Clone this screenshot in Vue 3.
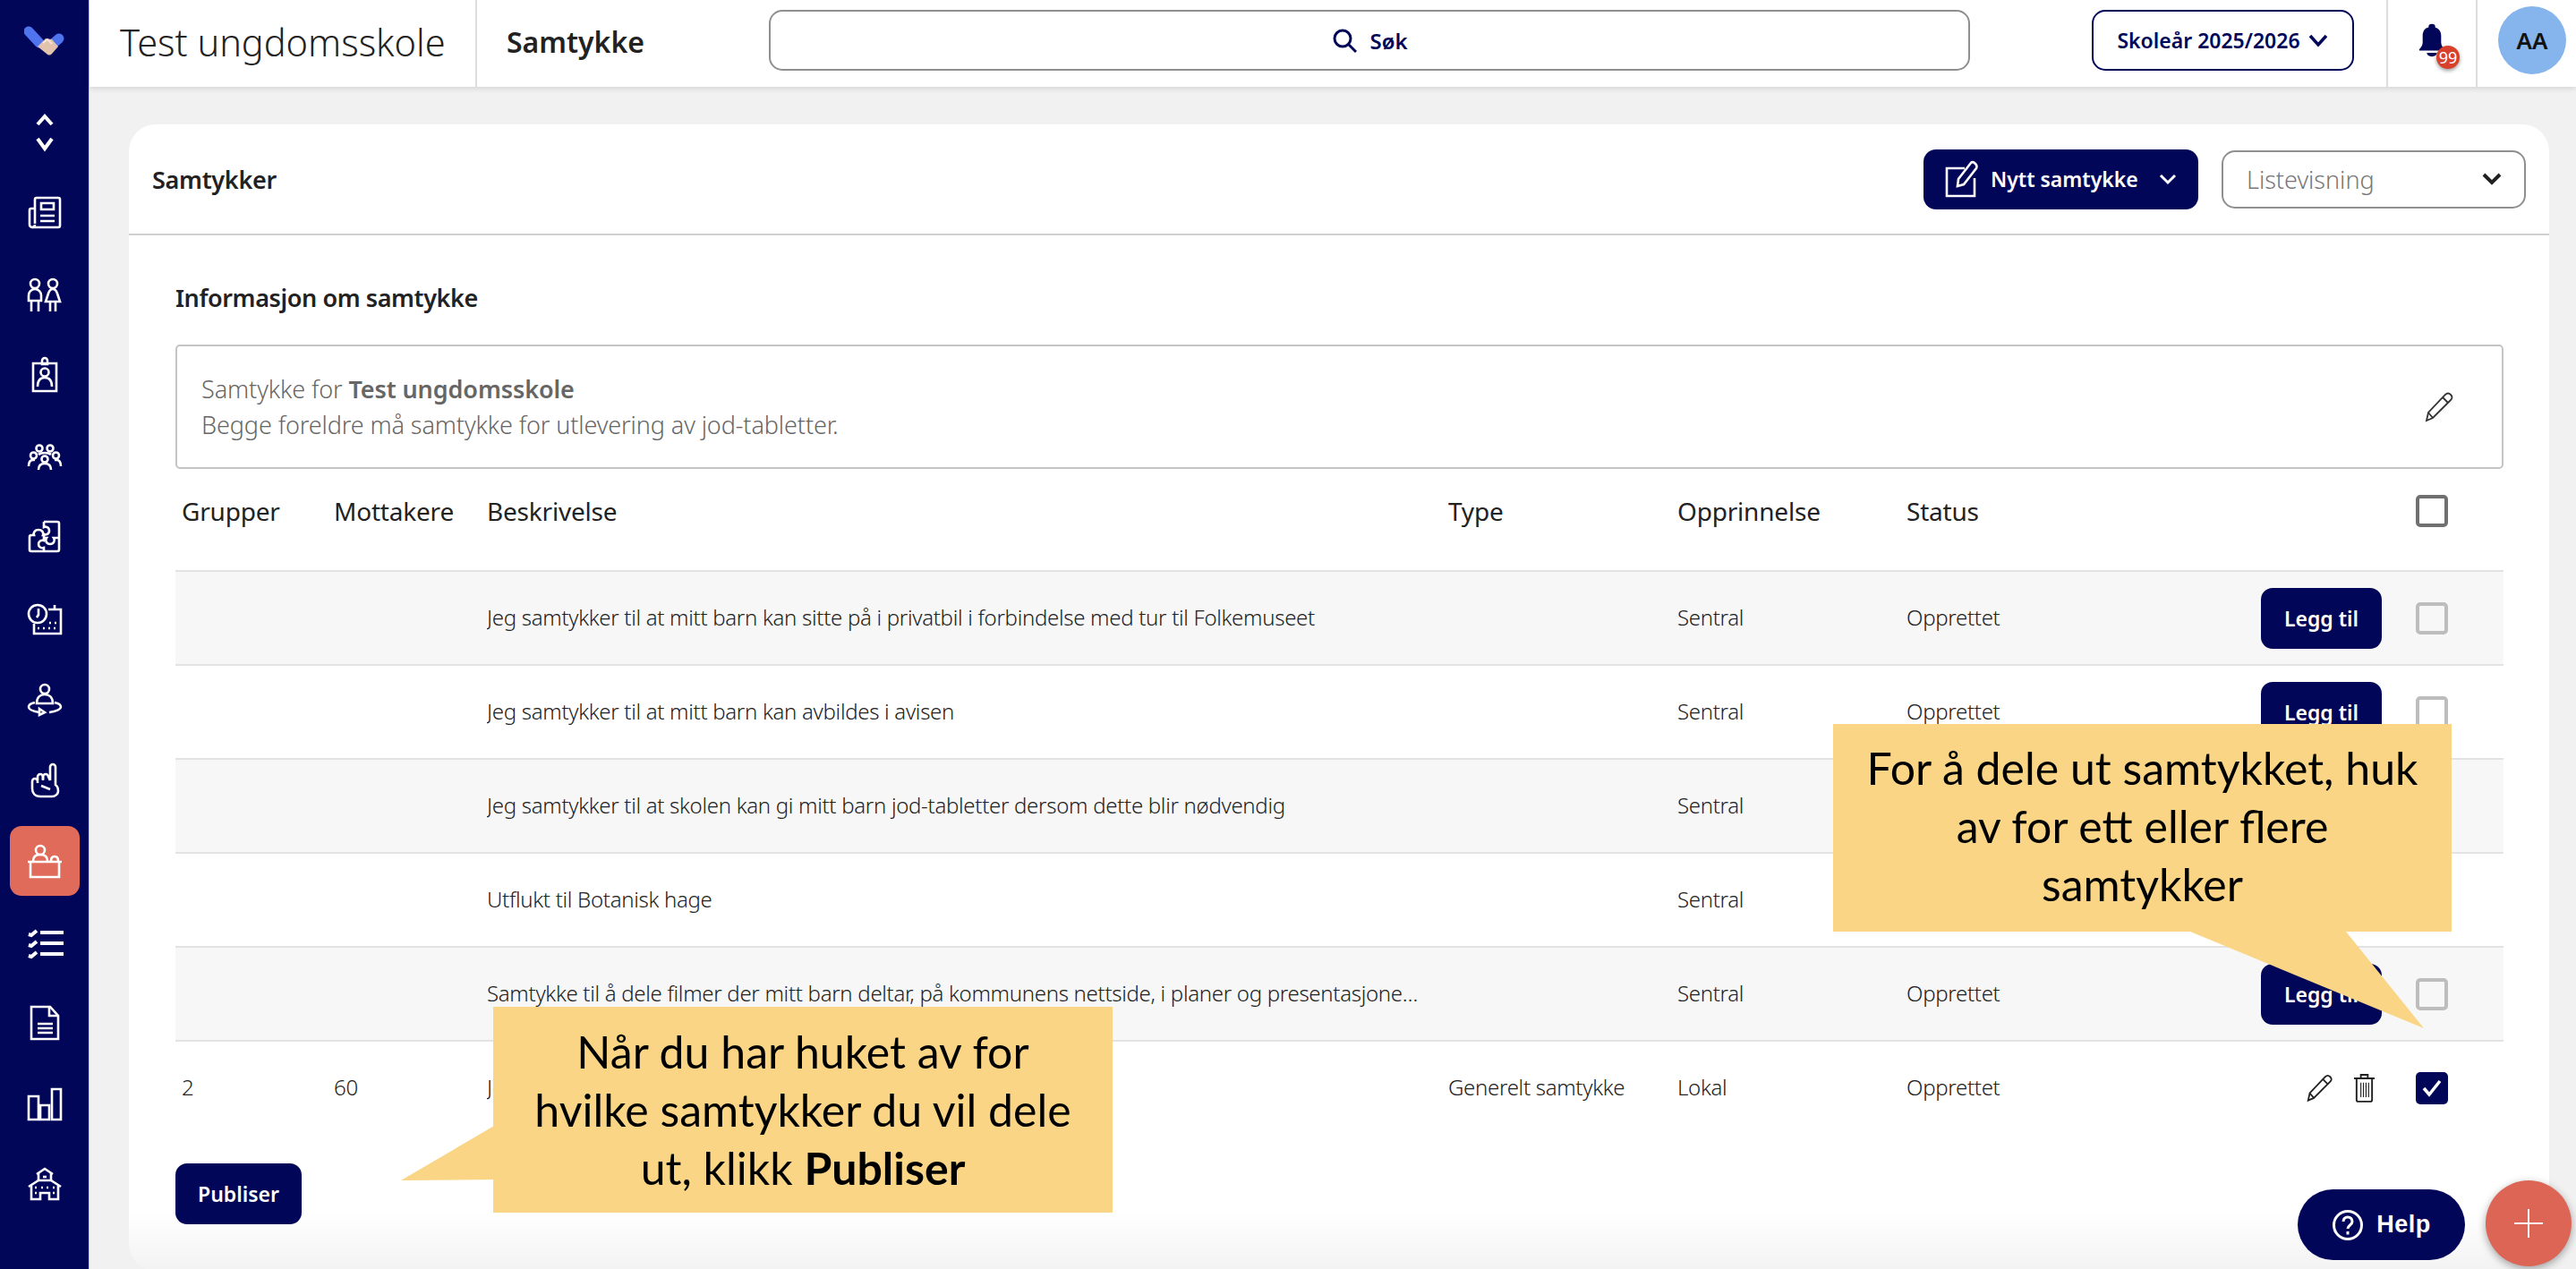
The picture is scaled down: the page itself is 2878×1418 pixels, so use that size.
<script setup>
import { ref } from 'vue'

const navIcons = [
  { paths: ['M13 36V9a2 2 0 0 1 2-2h24a2 2 0 0 1 2 2v29a2 2 0 0 1-2 2H10', 'M13 19H9a2 2 0 0 0-2 2v16a3 3 0 0 0 3 3 3 3 0 0 0 3-3', 'M20 13h14v7H20z', 'M19 27h16M19 33h16'] },
  { paths: ['M8 12a5 5 0 1 0 10 0 5 5 0 1 0-10 0', 'M28 12a5 5 0 1 0 10 0 5 5 0 1 0-10 0', 'M6 31v-6a7 7 0 0 1 14 0v6z', 'M9 31v12M17 31v12', 'M33 18c-3 0-4 2-5 5l-3 9h16l-3-9c-1-3-2-5-5-5z', 'M30 32v11M36 32v11'] },
  { paths: ['M11 11h26v31H11z', 'M24 5a3 3 0 0 0-3 3v4h6V8a3 3 0 0 0-3-3z', 'M19.500 21a4.500 4.500 0 1 0 9 0 4.500 4.500 0 1 0-9 0', 'M16 37c0-7 3-10 8-10s8 3 8 10'] },
  { paths: ['M14.500 15a3.500 3.500 0 1 0 7 0 3.500 3.500 0 1 0-7 0', 'M26.500 15a3.500 3.500 0 1 0 7 0 3.500 3.500 0 1 0-7 0', 'M8 23a3.500 3.500 0 1 0 7 0 3.500 3.500 0 1 0-7 0', 'M33 23a3.500 3.500 0 1 0 7 0 3.500 3.500 0 1 0-7 0', 'M20.500 27a3.500 3.500 0 1 0 7 0 3.500 3.500 0 1 0-7 0', 'M6 35c0-5 2-7 5-7h2M42 35c0-5-2-7-5-7h-2', 'M17 39c0-5 3-7 7-7s7 2 7 7', 'M17 22c1-1 3-2 7-2s6 1 7 2'] },
  { paths: ['M23 7h15a2 2 0 0 1 2 2v29a2 2 0 0 1-2 2H9a2 2 0 0 1-2-2V24a2 2 0 0 1 2-2h3c-1-3 1-6 5-6s6 3 5 6h1', 'M23 7v6c2-1 6 0 6 4s-4 5-6 4v4', 'M23 25h3c-2 3 0 7 4 7s6-4 4-7h6', 'M23 25v3c-3-1-6 1-6 4s3 5 6 4v4'] },
  { paths: ['M6 19a10 10 0 1 0 20 0 10 10 0 1 0-20 0', 'M17 13v7l-2 3', 'M28 14h14v27H12V30', 'M35 9v5', 'M16 35h2M22 35h2M28 35h2M34 35h2M29 29h2M35 29h2'] },
  { paths: ['M19 13a5 5 0 1 0 10 0 5 5 0 1 0-10 0', 'M15 29c0-7 4-10 9-10s9 3 9 10z', 'M13 28c-5 1-7 3-7 5 0 3 6 5 12 6', 'M35 28c5 1 7 3 7 5 0 3-7 5-13 6', 'M18 35l6 4-6 3z'] },
  { paths: ['M30 24V9a3 3 0 0 1 6 0v20c3 2 3 5 3 7 0 3-3 6-7 6H19c-6 0-9-4-9-9v-8a3 3 0 0 1 6 0v2', 'M16 24v-4a3 3 0 0 1 6 0v4', 'M22 23v-3a3 3 0 0 1 6 0l2 4', 'M20 30l10 4'] },
  { active: true, paths: ['M14 12a5 5 0 1 0 10 0 5 5 0 1 0-10 0', 'M11 24c0-5 3-7 8-7s8 2 8 7', 'M31 24c0-3 1-5 4-5s4 2 4 5', 'M5 25h38', 'M8 25v17h32V25'] },
  { paths: ['M19 13h26M19 25h26M19 37h26', 'M6 15l3 1 6-5M6 27l3 1 6-5M6 39l3 1 6-5'], heavy: true },
  { paths: ['M9 6h21l9 10v26H9z', 'M29 6v10h10', 'M16 25h17M16 30h17M16 35h17'] },
  { paths: ['M6 15h11v26H6z', 'M19 25h10v16H19z', 'M32 7h10v34H32z'] },
  { paths: ['M15 12l9-6 9 6', 'M17 11v8M31 11v8', 'M6 26l11-7h14l11 7', 'M9 25v15h10v-7h10v7h10V25', 'M22 15h4', 'M13 27h2M20 27h2M26 27h2M33 27h2M13 33h2M33 33h2'] }
]

const rows = ref([
  { text: 'Jeg samtykker til at mitt barn kan sitte på i privatbil i forbindelse med tur til Folkemuseet', origin: 'Sentral', status: 'Opprettet' },
  { text: 'Jeg samtykker til at mitt barn kan avbildes i avisen', origin: 'Sentral', status: 'Opprettet' },
  { text: 'Jeg samtykker til at skolen kan gi mitt barn jod-tabletter dersom dette blir nødvendig', origin: 'Sentral', status: 'Opprettet' },
  { text: 'Utflukt til Botanisk hage', origin: 'Sentral', status: 'Opprettet' },
  { text: 'Samtykke til å dele filmer der mitt barn deltar, på kommunens nettside, i planer og presentasjoner for foreldre og ansatte', origin: 'Sentral', status: 'Opprettet' },
  { groups: '2', receivers: '60', text: 'Jeg samtykker til at mitt barn kan delta', type: 'Generelt samtykke', origin: 'Lokal', status: 'Opprettet', published: true }
])
</script>

<template>
  <div class="page">
    <aside class="sidebar">
      <div class="logo">
        <svg width="46" height="34" viewBox="0 0 46 34">
          <path d="M5 6 L17 19" stroke="#4f74ee" stroke-width="11" stroke-linecap="round" />
          <path d="M39 14 L31 21" stroke="#4f74ee" stroke-width="11" stroke-linecap="round" />
          <path d="M15 23 L24 14 L31 15 L38 23 L31 31 Q28 34 25 31 Z" fill="#e3c3ad" />
          <path d="M21 19 L26 15 L31 20" fill="none" stroke="#f4e4d6" stroke-width="2" />
        </svg>
      </div>
      <div class="toggle">
        <svg width="24" height="46" viewBox="0 0 24 46" fill="none" stroke="#fff" stroke-width="4">
          <path d="M4 12L12 3l8 9" />
          <path d="M4 28l8 11 8-11" />
        </svg>
      </div>
      <nav class="nav">
        <div v-for="(icon, i) in navIcons" :key="i" class="nav-item">
          <span class="nav-icon" :class="{ active: icon.active }">
            <svg width="48" height="48" viewBox="0 0 48 48" fill="none" stroke="#fff" :stroke-width="icon.heavy ? 4 : 2.6">
              <path v-for="(d, j) in icon.paths" :key="j" :d="d" />
            </svg>
          </span>
        </div>
      </nav>
    </aside>

    <div class="main">
      <header class="topbar">
        <div class="school">Test ungdomsskole</div>
        <div class="page-name">Samtykke</div>
        <div class="search">
          <svg width="30" height="30" viewBox="0 0 30 30" fill="none" stroke="#020659" stroke-width="3">
            <circle cx="13" cy="13" r="9" />
            <path d="M20 20l8 8" />
          </svg>
          <span>Søk</span>
        </div>
        <div class="year">
          <span>Skoleår 2025/2026</span>
          <svg width="24" height="16" viewBox="0 0 24 16" fill="none" stroke="#020659" stroke-width="3.500">
            <path d="M3 3l9 10 9-10" />
          </svg>
        </div>
        <div class="bell-box">
          <svg width="30" height="38" viewBox="0 0 32 46" preserveAspectRatio="none" fill="#020659">
            <circle cx="16" cy="5" r="4" />
            <path d="M15 5c-7 0-10 5-10 12v9c0 4-2 7-4 9v2h30v-2c-2-2-4-5-4-9v-9c0-7-3-12-12-12z" />
            <path d="M10 40h12c0 3-3 5-6 5s-6-2-6-5z" />
          </svg>
          <span class="badge">99</span>
        </div>
        <div class="avatar-box">
          <div class="avatar">AA</div>
        </div>
      </header>

      <div class="content">
        <section class="card">
          <div class="card-head">
            <h1>Samtykker</h1>
            <button class="new-btn">
              <svg width="38" height="42" viewBox="0 0 38 42" fill="none" stroke="#fff" stroke-width="2.600">
                <path d="M22 9H2v31h31V20" />
                <path d="M14 29l1-8L29 3c1-1 3-1 5 1s2 3 1 5L21 27z" />
              </svg>
              <span>Nytt samtykke</span>
              <svg class="new-chev" width="20" height="14" viewBox="0 0 20 14" fill="none" stroke="#fff" stroke-width="3">
                <path d="M2 3l8 8 8-8" />
              </svg>
            </button>
            <div class="view-select">
              <span>Listevisning</span>
              <svg width="24" height="16" viewBox="0 0 24 16" fill="none" stroke="#222" stroke-width="4">
                <path d="M3 3l9 9 9-9" />
              </svg>
            </div>
          </div>

          <div class="card-body">
            <h2>Informasjon om samtykke</h2>
            <div class="info">
              <div class="info-text">
                <div>Samtykke for <b>Test ungdomsskole</b></div>
                <div>Begge foreldre må samtykke for utlevering av jod-tabletter.</div>
              </div>
              <svg class="pen" width="34" height="34" viewBox="0 0 34 34" fill="none" stroke="#333" stroke-width="1.800">
                <path d="M3 32l2-9L24 3c2-2 4-2 6 0s2 4 0 6L10 29z" />
                <path d="M5 23l5 6M21 6l6 6" />
              </svg>
            </div>

            <div class="grid head">
              <span>Grupper</span>
              <span>Mottakere</span>
              <span>Beskrivelse</span>
              <span>Type</span>
              <span>Opprinnelse</span>
              <span>Status</span>
              <span class="actions"><i class="check dark"></i></span>
            </div>

            <div v-for="(row, i) in rows" :key="i" class="grid row" :class="{ odd: i % 2 === 0 }">
              <span>{{ row.groups }}</span>
              <span>{{ row.receivers }}</span>
              <span class="desc">{{ row.text }}</span>
              <span>{{ row.type }}</span>
              <span>{{ row.origin }}</span>
              <span>{{ row.status }}</span>
              <span class="actions">
                <template v-if="row.published">
                  <svg width="31" height="32" viewBox="0 0 34 34" fill="none" stroke="#222" stroke-width="2">
                    <path d="M3 32l2-9L24 3c2-2 4-2 6 0s2 4 0 6L10 29z" />
                    <path d="M5 23l5 6M21 6l6 6" />
                  </svg>
                  <svg class="trash" width="25" height="33" viewBox="0 0 26 34" fill="none" stroke="#222" stroke-width="2">
                    <path d="M1 6h24M9 6V2h8v4" />
                    <path d="M4 6v25a2 2 0 0 0 2 2h14a2 2 0 0 0 2-2V6" />
                    <path d="M9 11v17M12 11v17M15 11v17M18 11v17" stroke-width="1.200" />
                  </svg>
                  <i class="check on">
                    <svg width="28" height="24" viewBox="0 0 28 24" fill="none" stroke="#fff" stroke-width="3.500">
                      <path d="M5 12l6 7L23 4" />
                    </svg>
                  </i>
                </template>
                <template v-else>
                  <button class="add-btn">Legg til</button>
                  <i class="check"></i>
                </template>
              </span>
            </div>

            <button class="publish">Publiser</button>
          </div>
        </section>
      </div>
    </div>

    <div class="callout right">
      <svg class="tail" width="270" height="112" viewBox="0 0 270 112"><path d="M0 0H174L261 108z" fill="#f9d585" /></svg>
      For å dele ut samtykket, huk av for ett eller flere samtykker
    </div>
    <div class="callout left">
      <svg class="tail" width="106" height="62" viewBox="0 0 106 62"><path d="M106 0V60L2 61z" fill="#f9d585" /></svg>
      Når du har huket av for hvilke samtykker du vil dele ut, klikk <b>Publiser</b>
    </div>

    <button class="help">
      <svg width="36" height="36" viewBox="0 0 36 36" fill="none" stroke="#fff" stroke-width="3">
        <circle cx="18" cy="18" r="15.500" />
        <path d="M13 14c0-3 2-5 5-5s5 2 5 5c0 4-5 4-5 8" />
        <path d="M18 25v3.500" />
      </svg>
      <span>Help</span>
    </button>
    <button class="fab">
      <svg width="34" height="34" viewBox="0 0 34 34" stroke="#fff" stroke-width="2">
        <path d="M17 1v32M1 17h32" />
      </svg>
    </button>
  </div>
</template>

<style>
html, body {
  margin: 0;
  height: 100%;
  overflow: hidden;
}
</style>

<style scoped>
.page {
  position: relative;
  display: flex;
  width: 100%;
  height: 1418px;
  overflow: hidden;
  background: #f1f1f1;
  font-family: "Noto Sans", "Open Sans", sans-serif;
  color: #222;
}

.sidebar {
  flex: none;
  width: 100px;
  background: #020659;
  border-right: 1px solid #c9cad8;
  box-sizing: border-box;
}
.logo {
  height: 92px;
  display: flex;
  align-items: center;
  justify-content: center;
}
.toggle {
  height: 101px;
  padding-top: 35px;
  box-sizing: border-box;
  text-align: center;
}
.nav-item {
  height: 90.500px;
  display: flex;
  align-items: center;
  justify-content: center;
}
.nav-icon {
  width: 78px;
  height: 78px;
  display: flex;
  align-items: center;
  justify-content: center;
  border-radius: 13px;
}
.nav-icon.active {
  background: #e06b5a;
}

.main {
  flex: 1;
  min-width: 0;
  display: flex;
  flex-direction: column;
}

.topbar {
  flex: none;
  height: 97px;
  display: flex;
  align-items: stretch;
  background: #fff;
  box-shadow: 0 2px 6px rgba(0, 0, 0, 0.12);
  position: relative;
  z-index: 1;
}
.school {
  width: 433px;
  box-sizing: border-box;
  padding-left: 34px;
  font-size: 41.500px;
  font-weight: 300;
  line-height: 94px;
  border-right: 2px solid #ddd;
}
.page-name {
  width: 326px;
  box-sizing: border-box;
  padding-left: 33px;
  font-size: 32px;
  font-weight: 600;
  line-height: 94px;
}
.search {
  width: 1342px;
  height: 68px;
  margin-top: 11px;
  box-sizing: border-box;
  border: 2px solid #8f8f8f;
  border-radius: 15px;
  display: flex;
  align-items: center;
  justify-content: center;
  gap: 13px;
  color: #020659;
  font-size: 24px;
  font-weight: 600;
}
.year {
  width: 293px;
  height: 68px;
  margin: 11px 36px 0 136px;
  box-sizing: border-box;
  border: 2px solid #020659;
  border-radius: 15px;
  display: flex;
  align-items: center;
  justify-content: center;
  gap: 8px;
  color: #020659;
  font-size: 23px;
  font-weight: 600;
}
.bell-box {
  position: relative;
  width: 102px;
  border-left: 2px solid #ddd;
  border-right: 2px solid #ddd;
  display: flex;
  justify-content: center;
  padding-top: 26px;
  box-sizing: border-box;
}
.badge {
  position: absolute;
  left: 54px;
  top: 51px;
  width: 26px;
  height: 26px;
  border-radius: 50%;
  background: #d9402b;
  color: #fff;
  font-size: 18px;
  line-height: 26px;
  text-align: center;
  box-shadow: 0 2px 4px rgba(0, 0, 0, 0.4);
}
.avatar-box {
  flex: 1;
  display: flex;
  justify-content: center;
  padding: 7px 0 0 12px;
}
.avatar {
  width: 76px;
  height: 76px;
  border-radius: 50%;
  background: #85b5ec;
  color: #111;
  font-size: 26px;
  font-weight: 600;
  line-height: 76px;
  text-align: center;
}

.content {
  flex: 1;
  min-height: 0;
  padding: 42px 30px 0 44px;
}
.card {
  height: 1281px;
  box-sizing: border-box;
  background: linear-gradient(#fff 1215px, #f3f3f3 1279px);
  border-radius: 30px;
}
.card-head {
  height: 122px;
  display: flex;
  align-items: center;
  border-bottom: 2px solid #d0d0d0;
  padding: 0 26px 0 26px;
}
.card-head h1 {
  flex: 1;
  margin: 0;
  font-size: 27px;
  font-weight: 600;
  letter-spacing: -0.3px;
}
.new-btn {
  width: 307px;
  height: 67px;
  box-sizing: border-box;
  padding: 0 0 0 24px;
  display: flex;
  align-items: center;
  gap: 13px;
  border: 0;
  border-radius: 14px;
  background: #020659;
  color: #fff;
  font: 600 23px "Noto Sans", sans-serif;
}
.new-chev {
  margin-left: 10px;
}
.view-select {
  width: 340px;
  height: 65px;
  margin-left: 26px;
  box-sizing: border-box;
  border: 2px solid #8f8f8f;
  border-radius: 15px;
  padding: 0 24px 0 26px;
  display: flex;
  align-items: center;
  justify-content: space-between;
  color: #777;
  font-size: 27px;
  font-weight: 300;
}

.card-body {
  padding: 0 51px 0 52px;
}
.card-body h2 {
  margin: 0;
  padding: 50px 0 32px;
  font-size: 27px;
  font-weight: 600;
  letter-spacing: -0.4px;
  line-height: 40px;
}
.info {
  height: 139px;
  box-sizing: border-box;
  border: 2px solid #c4c4c4;
  border-radius: 5px;
  padding: 0 53px 0 27px;
  display: flex;
  align-items: center;
  justify-content: space-between;
  color: #666;
  font-size: 27px;
  font-weight: 300;
  letter-spacing: -0.1px;
  line-height: 40px;
}
.info b {
  font-weight: 600;
}
.pen {
  flex: none;
}

.grid {
  display: grid;
  grid-template-columns: 170px 171px 1074px 256px 256px 199px 1fr;
  align-items: center;
  padding-left: 7px;
}
.head {
  height: 113px;
  font-size: 28px;
  font-weight: 400;
  letter-spacing: -0.2px;
  padding-bottom: 20px;
  box-sizing: border-box;
}
.row {
  height: 105px;
  box-sizing: border-box;
  border-top: 2px solid #e3e3e3;
  font-size: 24px;
  font-weight: 300;
  letter-spacing: -0.3px;
}
.row > span:not(.actions) {
  margin-top: -3px;
}
.row.odd {
  background: #f7f7f7;
}
.desc {
  white-space: nowrap;
  overflow: hidden;
  text-overflow: ellipsis;
  padding-right: 30px;
}
.actions {
  display: flex;
  align-items: center;
  justify-content: flex-end;
  padding-right: 62px;
}
.check {
  flex: none;
  box-sizing: border-box;
  width: 36px;
  height: 36px;
  border: 4px solid #bdbdbd;
  border-radius: 5px;
  display: flex;
  align-items: center;
  justify-content: center;
  margin-left: 38px;
}
.check.dark {
  border-color: #707070;
}
.check.on {
  border: 0;
  background: #020659;
  margin-left: 45px;
}
.trash {
  margin-left: 22px;
}
.add-btn {
  width: 135px;
  height: 68px;
  border: 0;
  border-radius: 13px;
  background: #020659;
  color: #fff;
  font: 600 23px "Noto Sans", sans-serif;
}
.publish {
  display: block;
  width: 141px;
  height: 68px;
  margin-top: 33px;
  border: 0;
  border-radius: 13px;
  background: #020659;
  color: #fff;
  font: 600 23px "Noto Sans", sans-serif;
}

.callout {
  position: absolute;
  box-sizing: border-box;
  background: #f9d585;
  color: #000;
  font-family: Lato, sans-serif;
  font-size: 50px;
  line-height: 65px;
  text-align: center;
}
.callout.right {
  left: 2048px;
  top: 809px;
  width: 691px;
  height: 232px;
  padding: 17px 20px 0;
}
.callout.right .tail {
  position: absolute;
  left: 399px;
  top: 232px;
}
.callout.left {
  left: 551px;
  top: 1125px;
  width: 692px;
  height: 230px;
  padding: 18px 30px 0;
}
.callout.left .tail {
  position: absolute;
  left: -105px;
  top: 133px;
}
.callout b {
  font-weight: 700;
}

.help {
  position: absolute;
  left: 2567px;
  top: 1329px;
  width: 187px;
  height: 79px;
  border: 0;
  border-radius: 40px;
  background: #020659;
  color: #fff;
  display: flex;
  align-items: center;
  justify-content: center;
  gap: 14px;
  font: 700 27px "Liberation Sans", sans-serif;
  letter-spacing: 0.5px;
}
.fab {
  position: absolute;
  left: 2777px;
  top: 1319px;
  width: 96px;
  height: 96px;
  border: 0;
  padding: 0;
  border-radius: 50%;
  background: #dc6555;
  display: flex;
  align-items: center;
  justify-content: center;
  box-shadow: 0 3px 10px rgba(0, 0, 0, 0.35);
}
</style>
